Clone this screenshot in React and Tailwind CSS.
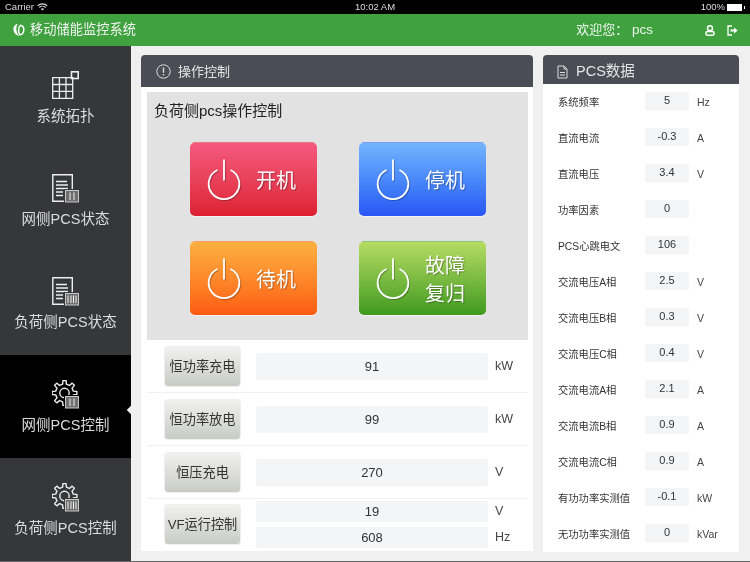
import React from "react";

const font = { fontFamily: '"Liberation Sans","Noto Sans CJK SC",sans-serif' };

function gearPath(cx, cy, rOut, rIn, teeth) {
  const pts = [];
  const step = (Math.PI * 2) / teeth;
  for (let i = 0; i < teeth; i++) {
    const a = i * step - Math.PI / 2;
    const w = step * 0.2;
    const p = [
      [rIn, a - w * 1.35],
      [rOut, a - w * 0.8],
      [rOut, a + w * 0.8],
      [rIn, a + w * 1.35],
    ];
    p.forEach(([r, t]) => pts.push(`${(cx + r * Math.cos(t)).toFixed(2)} ${(cy + r * Math.sin(t)).toFixed(2)}`));
  }
  return "M" + pts.join(" L") + " Z";
}
const gearD = gearPath(12.5, 13, 12.5, 9, 8);

function Power() {
  return (
    <svg width="34" height="42" viewBox="0 0 34 42" className="shrink-0 drop-shadow-[1px_1px_0.5px_rgba(0,0,0,0.25)]" fill="none" stroke="#fff">
      <path d="M10.5 11 A15.3 15.3 0 1 0 23.5 11" strokeWidth="1.8" />
      <path d="M17 0.5 V21.5" strokeWidth="1.8" />
    </svg>
  );
}

function PowerBtn({ cls, children }) {
  return (
    <div className={"flex h-[74px] w-[127px] items-center gap-[15px] rounded-[5px] pl-[17px] border-t border-white/40 shadow-[0_1px_1px_rgba(255,255,255,0.6)] " + cls}>
      <Power />
      <div className="pt-[2px] text-[20px] leading-[28px] text-white [text-shadow:1px_1px_1px_rgba(0,0,0,0.3)]">{children}</div>
    </div>
  );
}

function Tiles() {
  return (
    <svg width="27" height="28" viewBox="0 0 27 28" fill="none" stroke="#eee" strokeWidth="1.3">
      <rect x="19.5" y="0.8" width="6.7" height="6.7" strokeWidth="1.6" />
      <path d="M0.7 6.7 H20.7 V27.3 H0.7 Z M0.7 13.5 H20.7 M0.7 20.4 H20.7 M7.4 6.7 V27.3 M14 6.7 V27.3" />
    </svg>
  );
}

function Badge({ bars, bg }) {
  return (
    <>
      <rect x="12" y="15" width="16" height="15" fill={bg} stroke="none" />
      <rect x="13.5" y="16.5" width="13" height="11.5" fill="#6f6f6f" stroke="#c8c8c8" strokeWidth="1" />
      {bars.map((x) => (
        <path key={x} d={`M${x} 18.5 V26`} stroke="#f0f0f0" strokeWidth="1" />
      ))}
    </>
  );
}

function Doc({ bars }) {
  return (
    <svg width="28" height="30" viewBox="0 0 28 30" fill="none" stroke="#eee">
      <path d="M20.3 16 V0.8 H0.8 V27.3 H12" strokeWidth="1.4" />
      <path d="M4 7.5 H15 M4 11 H16 M4 14.5 H16 M4 18 H11 M4 21.5 H11" strokeWidth="1.5" />
      <Badge bars={bars} bg="#36373b" />
    </svg>
  );
}

function Gear({ bars, bg }) {
  return (
    <svg width="28" height="30" viewBox="0 0 28 30" fill="none" stroke="#eee" strokeWidth="1.4">
      <path d={gearD} strokeLinejoin="round" />
      <circle cx="12.5" cy="13" r="4.7" />
      <Badge bars={bars} bg={bg} />
    </svg>
  );
}

function NavItem({ icon, label, active }) {
  return (
    <div className={"relative flex h-[103px] flex-col items-center pt-[25px] " + (active ? "bg-black" : "")}>
      <div className="h-[30px]">{icon}</div>
      <div className="mt-[3px] text-[14.5px] leading-[24px] whitespace-nowrap text-[#dcdcdc]">{label}</div>
      {active && <div className="absolute right-[-3px] top-[52px] h-[6px] w-[6px] rotate-45 bg-[#f0f0f0]" />}
    </div>
  );
}

function CtlBtn({ children }) {
  return (
    <div className="flex h-[41px] w-[77px] shrink-0 items-center justify-center rounded-[4px] border border-[#eeeeee] bg-gradient-to-b from-[#f1f1ef] to-[#c9cbc5] text-[13.2px] whitespace-nowrap text-[#333]">
      {children}
    </div>
  );
}

function Field({ value, unit, h = "h-[27px]" }) {
  return (
    <div className="flex items-center">
      <div className={"flex w-[232px] items-center justify-center rounded-[2px] bg-[#f4f5f7] text-[13px] text-[#333] " + h}>{value}</div>
      <div className="ml-[7px] text-[12.5px] text-[#444]">{unit}</div>
    </div>
  );
}

function Row({ label, value, unit }) {
  return (
    <div className="flex h-[53px] items-center border-b border-[#f1f1f1] pl-[17px] pt-[1px]">
      <CtlBtn>{label}</CtlBtn>
      <div className="ml-[15px]">
        <Field value={value} unit={unit} />
      </div>
    </div>
  );
}

const data = [
  ["系统频率", "5", "Hz"],
  ["直流电流", "-0.3", "A"],
  ["直流电压", "3.4", "V"],
  ["功率因素", "0", ""],
  ["PCS心跳电文", "106", ""],
  ["交流电压A相", "2.5", "V"],
  ["交流电压B相", "0.3", "V"],
  ["交流电压C相", "0.4", "V"],
  ["交流电流A相", "2.1", "A"],
  ["交流电流B相", "0.9", "A"],
  ["交流电流C相", "0.9", "A"],
  ["有功功率实测值", "-0.1", "kW"],
  ["无功功率实测值", "0", "kVar"],
];

export default function App() {
  return (
    <div style={font} className="flex h-[562px] w-[750px] flex-col overflow-hidden bg-[#f0f0f0] opacity-[0.999]">
      <div className="flex h-[14px] items-center justify-between bg-black px-[5px] text-[9.5px] text-[#ddd]">
        <div className="flex w-[100px] items-center gap-[3px]">
          <span>Carrier</span>
          <svg width="11" height="8" viewBox="0 0 11 8" fill="none" stroke="#ddd" strokeWidth="1.1">
            <path d="M0.7 2.8 A7 7 0 0 1 10.3 2.8 M2.3 4.5 A4.6 4.6 0 0 1 8.7 4.5" />
            <path d="M5.5 7.6 L3.9 6 A2.3 2.3 0 0 1 7.1 6 Z" fill="#ddd" stroke="none" />
          </svg>
        </div>
        <span>10:02 AM</span>
        <div className="flex w-[100px] items-center justify-end gap-[2px]">
          <span>100%</span>
          <div className="h-[7px] w-[15px] bg-white" />
          <div className="h-[3px] w-[1px] bg-white" />
        </div>
      </div>

      <div className="flex h-[32px] items-center bg-[#3fa23f] text-white">
        <svg className="ml-[13px]" width="12" height="14" viewBox="0 0 12 14" fill="none">
          <path d="M5 0.5 C1.5 1.5 0 4 0.5 7 C1 10 3 12.5 6.5 13 C4.5 11 3.3 8.5 3.3 6 C3.3 4 4 2 5 0.5 Z" fill="#fff" />
          <path d="M7.5 2.2 A4 4.6 0 0 1 10.8 7 C10.7 9.5 9 11.5 7 11.8 C5.3 10 4.7 5 7.5 2.2 Z" stroke="#fff" strokeWidth="1.5" />
        </svg>
        <div className="ml-[5px] text-[13.25px] whitespace-nowrap text-[#f2f2f2]">移动储能监控系统</div>
        <div className="ml-auto text-[13px] text-[#eef5ee]">
          欢迎您： <span className="text-[13.5px]">pcs</span>
        </div>
        <svg className="ml-[52px]" width="10" height="11" viewBox="0 0 10 11" fill="none" stroke="#fff" strokeWidth="1.5">
          <ellipse cx="5" cy="3.2" rx="2.5" ry="2.5" />
          <rect x="1" y="6.5" width="8" height="3.7" rx="1.5" />
        </svg>
        <svg className="ml-[12px] mr-[12px]" width="11" height="11" viewBox="0 0 11 11" fill="none" stroke="#fff" strokeWidth="1.3">
          <path d="M5 1 H1 V10 H5" />
          <path d="M3.5 4.5 H7 V2.5 L10.7 5.5 L7 8.5 V6.5 H3.5 Z" fill="#fff" stroke="none" />
        </svg>
      </div>

      <div className="flex h-[515px] shrink-0">
        <div className="w-[131px] shrink-0 bg-[#36373b]">
          <NavItem icon={<Tiles />} label="系统拓扑" />
          <NavItem icon={<Doc bars={[18, 22]} />} label="网侧PCS状态" />
          <NavItem icon={<Doc bars={[16, 19, 21.5, 24]} />} label="负荷侧PCS状态" />
          <NavItem active icon={<Gear bg="#000" bars={[18, 22]} />} label="网侧PCS控制" />
          <NavItem icon={<Gear bg="#36373b" bars={[16, 19, 21.5, 24]} />} label="负荷侧PCS控制" />
        </div>

        <div className="flex flex-1 items-start gap-[10px] pl-[10px] pt-[9px]">
          <div className="w-[392px]">
            <div className="flex h-[32px] items-center rounded-t-[4px] bg-[#4b4d56] pl-[15px] pt-[1px] text-[13px] text-[#e4e4e4]">
              <svg width="15" height="15" viewBox="0 0 15 15" fill="none" stroke="#ddd" strokeWidth="1">
                <circle cx="7.5" cy="7.5" r="6.7" />
                <path d="M7.5 3.5 V8.7 M7.5 10 V11.5" strokeWidth="1.4" />
              </svg>
              <span className="ml-[7px]">操作控制</span>
            </div>
            <div className="h-[464px] bg-white pl-[6px] pr-[5px] pt-[5px]">
              <div className="h-[248px] bg-[#e2e2e2] pl-[7px] pt-[8px]">
                <div className="text-[15px] leading-[22px] text-[#222]">负荷侧pcs操作控制</div>
                <div className="ml-[36px] mt-[20px] grid w-[296px] grid-cols-[127px_127px] gap-x-[42px] gap-y-[25px]">
                  <PowerBtn cls="bg-gradient-to-b from-[#f4597e] to-[#dd1f31]">开机</PowerBtn>
                  <PowerBtn cls="bg-gradient-to-b from-[#74b4fd] to-[#2a55f5]">停机</PowerBtn>
                  <PowerBtn cls="bg-gradient-to-b from-[#fbb040] to-[#fd5a10]">待机</PowerBtn>
                  <PowerBtn cls="bg-gradient-to-b from-[#b5dc63] to-[#3c9a1e]">
                    故障
                    <br />
                    复归
                  </PowerBtn>
                </div>
              </div>
              <Row label="恒功率充电" value="91" unit="kW" />
              <Row label="恒功率放电" value="99" unit="kW" />
              <Row label="恒压充电" value="270" unit="V" />
              <div className="flex h-[51px] items-center pl-[17px]">
                <CtlBtn>VF运行控制</CtlBtn>
                <div className="ml-[15px] flex flex-col gap-[5px]">
                  <Field value="19" unit="V" h="h-[21px]" />
                  <Field value="608" unit="Hz" h="h-[21px]" />
                </div>
              </div>
            </div>
          </div>

          <div className="w-[196px]">
            <div className="flex h-[29px] items-center rounded-t-[4px] bg-[#4b4d56] pl-[14px] pt-[5px] text-[14.5px] text-[#e4e4e4]">
              <svg width="11" height="14" viewBox="0 0 11 14" fill="none" stroke="#ddd" strokeWidth="1">
                <path d="M1 1 H7 L10 4 V13 H1 Z M7 1 V4 H10 M3 7.5 H8 M3 10 H8" />
              </svg>
              <span className="ml-[8px]">PCS数据</span>
            </div>
            <div className="h-[468px] bg-white pl-[15px]">
              {data.map(([l, v, u]) => (
                <div key={l} className="flex h-[36px] items-center pt-[2px]">
                  <div className="w-[87px] text-[10.3px] whitespace-nowrap text-[#333]">{l}</div>
                  <div className="mb-[4px] flex h-[18px] w-[44px] items-center justify-center rounded-[2px] bg-[#f4f5f7] pb-[1px] text-[11px] text-[#333]">{v}</div>
                  <div className="ml-[8px] text-[10.5px] text-[#444]">{u}</div>
                </div>
              ))}
            </div>
          </div>
        </div>
      </div>
      <div className="h-[1px] bg-[#666]" />
    </div>
  );
}
